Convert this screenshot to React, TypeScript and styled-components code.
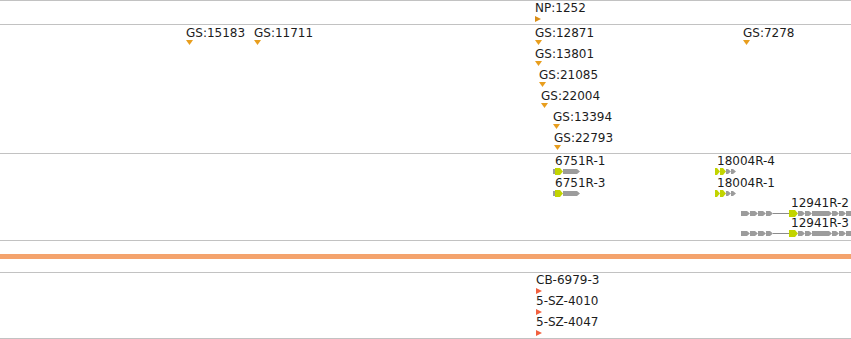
import styled, { createGlobalStyle } from "styled-components";

const GlobalStyle = createGlobalStyle`
  body {
    margin: 0;
    background: #fff;
    font-family: "DejaVu Sans", Verdana, sans-serif;
  }
`;

type Marker = "down" | "right" | "flag";

type Part = {
  x: number;
  w: number;
  kind: "exon" | "cds" | "line";
};

type Point = {
  id: string;
  label: string;
  left: number;
  top: number;
  marker: Marker;
};

type Gene = {
  id: string;
  label: string;
  left: number;
  top: number;
  indent: number;
  width: number;
  parts: Part[];
};

const NP: Point[] = [
  { id: "np", label: "NP:1252", left: 535, top: 1, marker: "right" },
];

const GS: Point[] = [
  { id: "g1", label: "GS:15183", left: 186, top: 2, marker: "down" },
  { id: "g2", label: "GS:11711", left: 254, top: 2, marker: "down" },
  { id: "g3", label: "GS:12871", left: 535, top: 2, marker: "down" },
  { id: "g4", label: "GS:7278", left: 743, top: 2, marker: "down" },
  { id: "g5", label: "GS:13801", left: 535, top: 23, marker: "down" },
  { id: "g6", label: "GS:21085", left: 539, top: 44, marker: "down" },
  { id: "g7", label: "GS:22004", left: 541, top: 65, marker: "down" },
  { id: "g8", label: "GS:13394", left: 553, top: 86, marker: "down" },
  { id: "g9", label: "GS:22793", left: 554, top: 107, marker: "down" },
];

const FLAGS: Point[] = [
  { id: "c1", label: "CB-6979-3", left: 536, top: 1, marker: "flag" },
  { id: "c2", label: "5-SZ-4010", left: 536, top: 22, marker: "flag" },
  { id: "c3", label: "5-SZ-4047", left: 536, top: 43, marker: "flag" },
];

const short6751: Part[] = [
  { x: 0, w: 2, kind: "exon" },
  { x: 2, w: 8, kind: "cds" },
  { x: 10, w: 17, kind: "exon" },
];

const short18004: Part[] = [
  { x: 0, w: 5, kind: "cds" },
  { x: 5, w: 6, kind: "cds" },
  { x: 11, w: 5, kind: "exon" },
  { x: 16, w: 5, kind: "exon" },
];

const long12941: Part[] = [
  { x: 0, w: 9, kind: "exon" },
  { x: 9, w: 8, kind: "exon" },
  { x: 17, w: 8, kind: "exon" },
  { x: 25, w: 7, kind: "exon" },
  { x: 32, w: 16, kind: "line" },
  { x: 48, w: 9, kind: "cds" },
  { x: 57, w: 7, kind: "exon" },
  { x: 64, w: 7, kind: "exon" },
  { x: 71, w: 20, kind: "exon" },
  { x: 91, w: 7, kind: "exon" },
  { x: 98, w: 7, kind: "exon" },
  { x: 105, w: 8, kind: "exon" },
];

const GENES: Gene[] = [
  { id: "a1", label: "6751R-1", left: 553, top: 1, indent: 2, width: 28, parts: short6751 },
  { id: "a2", label: "6751R-3", left: 553, top: 23, indent: 2, width: 28, parts: short6751 },
  { id: "b1", label: "18004R-4", left: 715, top: 1, indent: 2, width: 22, parts: short18004 },
  { id: "b2", label: "18004R-1", left: 715, top: 23, indent: 2, width: 22, parts: short18004 },
  { id: "d1", label: "12941R-2", left: 741, top: 43, indent: 50, width: 114, parts: long12941 },
  { id: "d2", label: "12941R-3", left: 741, top: 63, indent: 50, width: 114, parts: long12941 },
];

const App = () => {
  return (
    <>
      <GlobalStyle />
      <Browser>
        <Track $height={23}>
          {NP.map((p) => (
            <PointFeature key={p.id} point={p} />
          ))}
        </Track>
        <Track $height={128}>
          {GS.map((p) => (
            <PointFeature key={p.id} point={p} />
          ))}
        </Track>
        <Track $height={86}>
          {GENES.map((g) => (
            <Feature key={g.id} style={{ left: g.left, top: g.top }}>
              <Label $indent={g.indent}>{g.label}</Label>
              <GeneGlyph width={g.width} parts={g.parts} />
            </Feature>
          ))}
        </Track>
        <Separator>
          <Band />
        </Separator>
        <Track $height={65} $last>
          {FLAGS.map((p) => (
            <PointFeature key={p.id} point={p} />
          ))}
        </Track>
      </Browser>
    </>
  );
};

export default App;

const PointFeature = ({ point }: { point: Point }) => (
  <Feature style={{ left: point.left, top: point.top }}>
    <Label>{point.label}</Label>
    <MarkerIcon type={point.marker} />
  </Feature>
);

const MarkerIcon = ({ type }: { type: Marker }) => {
  if (type === "down") {
    return (
      <MarkerSvg width={7} height={5} $gap={0}>
        <polygon points="0,0 7,0 3.5,5" fill="#e89e1e" />
      </MarkerSvg>
    );
  }
  return (
    <MarkerSvg width={6} height={6} $gap={1}>
      <polygon
        points="0,0 6,3 0,6"
        fill={type === "right" ? "#d98e17" : "#f2603e"}
      />
    </MarkerSvg>
  );
};

// block with a pointed right end, like a strand arrow
const arrow = (x: number, w: number, y: number, h: number) => {
  const tip = Math.min(3, w - 2);
  return `${x},${y} ${x + w - tip},${y} ${x + w},${y + h / 2} ${
    x + w - tip
  },${y + h} ${x},${y + h}`;
};

const GeneGlyph = ({ width, parts }: { width: number; parts: Part[] }) => (
  <GlyphSvg width={width} height={7}>
    {parts.map((p, i) => {
      if (p.kind === "line") {
        return (
          <rect
            key={i}
            x={p.x}
            y={3}
            width={p.w}
            height={1}
            fill="#8c8c8c"
            shapeRendering="crispEdges"
          />
        );
      }
      if (p.kind === "cds") {
        return (
          <polygon key={i} points={arrow(p.x, p.w, 0, 7)} fill="#c2d400" />
        );
      }
      return (
        <polygon key={i} points={arrow(p.x, p.w, 1, 5)} fill="#9c9c9c" />
      );
    })}
  </GlyphSvg>
);

const Browser = styled.div`
  width: 851px;
  height: 339px;
  display: flex;
  flex-direction: column;
  overflow: hidden;
  background: #fff;
`;

const Track = styled.div<{ $height: number; $last?: boolean }>`
  position: relative;
  flex: none;
  height: ${({ $height }) => $height}px;
  border-top: 1px solid #c2c2c2;
  border-bottom: ${({ $last }) => ($last ? "1px solid #c2c2c2" : "none")};
  overflow: hidden;
`;

const Separator = styled.div`
  flex: none;
  height: 31px;
  border-top: 1px solid #c2c2c2;
  display: flex;
  align-items: center;
`;

const Band = styled.div`
  width: 100%;
  height: 5px;
  background-color: #f4a36d;
`;

const Feature = styled.div`
  position: absolute;
  display: flex;
  flex-direction: column;
  align-items: flex-start;
`;

const Label = styled.span<{ $indent?: number }>`
  font-size: 12px;
  line-height: 13px;
  color: #1c1c1c;
  white-space: nowrap;
  padding-left: ${({ $indent }) => $indent ?? 0}px;
`;

const MarkerSvg = styled.svg<{ $gap: number }>`
  display: block;
  margin-top: ${({ $gap }) => $gap}px;
`;

const GlyphSvg = styled.svg`
  display: block;
  margin-top: 0;
  overflow: visible;
`;
